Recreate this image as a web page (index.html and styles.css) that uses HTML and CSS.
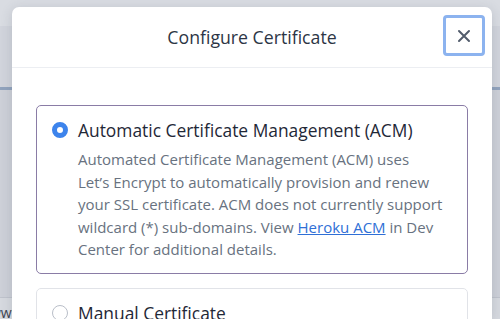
FILE: index.html
```html
<!DOCTYPE html>
<html>
<head>
<meta charset="utf-8">
<link rel="stylesheet" href="styles.css">
</head>
<body>
<div class="page">
  <div class="bg-top"></div>
  <div class="bg-mid"></div>
  <div class="bg-bar"></div>
  <div class="bg-body"></div>
  <div class="bg-line"></div>
  <div class="bg-foot"><span class="bg-text">www</span></div>
</div>
<div class="modal">
  <div class="modal-header">
    <h2 class="modal-title">Configure Certificate</h2>
    <button class="close-btn" aria-label="Close">
      <svg width="14" height="14" viewBox="0 0 14 14"><path d="M2 2L12 12M12 2L2 12" stroke="#525c6c" stroke-width="2" stroke-linecap="round"/></svg>
    </button>
  </div>
  <div class="modal-body">
    <div class="option selected">
      <span class="radio checked"></span>
      <div class="option-text">
        <div class="option-title">Automatic Certificate Management (ACM)</div>
        <p class="option-desc">Automated Certificate Management (ACM) uses <span class="brand">Let’s Encrypt</span> to automatically provision and renew your SSL certificate. ACM does not currently support wildcard (*) sub-domains. View <a href="#">Heroku ACM</a> in Dev Center for additional details.</p>
      </div>
    </div>
    <div class="option">
      <span class="radio"></span>
      <div class="option-text">
        <div class="option-title">Manual Certificate</div>
      </div>
    </div>
  </div>
</div>
</body>
</html>
```

FILE: styles.css
```css
html, body {
  margin: 0;
  padding: 0;
  width: 500px;
  height: 319px;
  overflow: hidden;
  font-family: "Open Sans", "Noto Sans", sans-serif;
}
.page {
  height: 319px;
  background: #d0d3db;
  display: flex;
  flex-direction: column;
}
.bg-top { height: 26px; background: #d9dce2; }
.bg-mid { height: 61px; background: #d1d4dc; }
.bg-bar { height: 3px; background: #91a3bd; }
.bg-body { height: 207px; background: #cdd0d8; }
.bg-line { height: 1px; background: #bfc3cc; }
.bg-foot { flex: 1; background: #d6d9df; position: relative; }
.bg-text {
  position: absolute;
  left: -10px;
  top: 7px;
  font-size: 14px;
  line-height: 16px;
  color: #3d4450;
}
.modal {
  position: absolute;
  left: 12px;
  top: 7px;
  width: 480px;
  height: 312px;
  overflow: hidden;
  background: #fff;
  border-radius: 7px 7px 0 0;
  box-shadow: 0 2px 12px rgba(60, 70, 90, 0.18);
}
.modal-header {
  height: 60px;
  border-bottom: 1px solid #eceef2;
  display: flex;
  align-items: center;
  justify-content: center;
  position: relative;
}
.modal-title {
  margin: 0;
  font-weight: 400;
  font-size: 17.7px;
  color: #2c3545;
}
.close-btn {
  position: absolute;
  right: 7px;
  top: 8px;
  width: 42px;
  height: 41px;
  box-sizing: border-box;
  border: 3px solid #8cb3ef;
  border-radius: 4px;
  background: #fff;
  display: flex;
  align-items: center;
  justify-content: center;
  padding: 0;
}
.modal-body {
  padding: 37px 24px 0 24px;
  display: flex;
  flex-direction: column;
  gap: 14px;
}
.option {
  border: 1px solid #e1e3e8;
  border-radius: 5px;
  display: flex;
  gap: 10px;
  padding: 13px 9px 14px 15px;
}
.option.selected {
  border-color: #8a7ca6;
  padding-bottom: 12px;
}
.radio {
  flex: none;
  width: 16px;
  height: 16px;
  margin-top: 3px;
  border-radius: 50%;
  box-sizing: border-box;
  border: 1px solid #b9bec8;
  background: #fff;
}
.radio.checked {
  border: 5px solid #3d84ec;
  background: #fff;
}
.option-title {
  font-size: 17.4px;
  color: #1f2837;
  line-height: 22px;
}
.option-desc {
  margin: 7px 0 0 0;
  font-size: 15px;
  line-height: 22.5px;
  color: #687280;
}
.brand {
  white-space: nowrap;
}
.option-desc a {
  color: #2f6fd6;
  text-decoration: underline;
}
```
